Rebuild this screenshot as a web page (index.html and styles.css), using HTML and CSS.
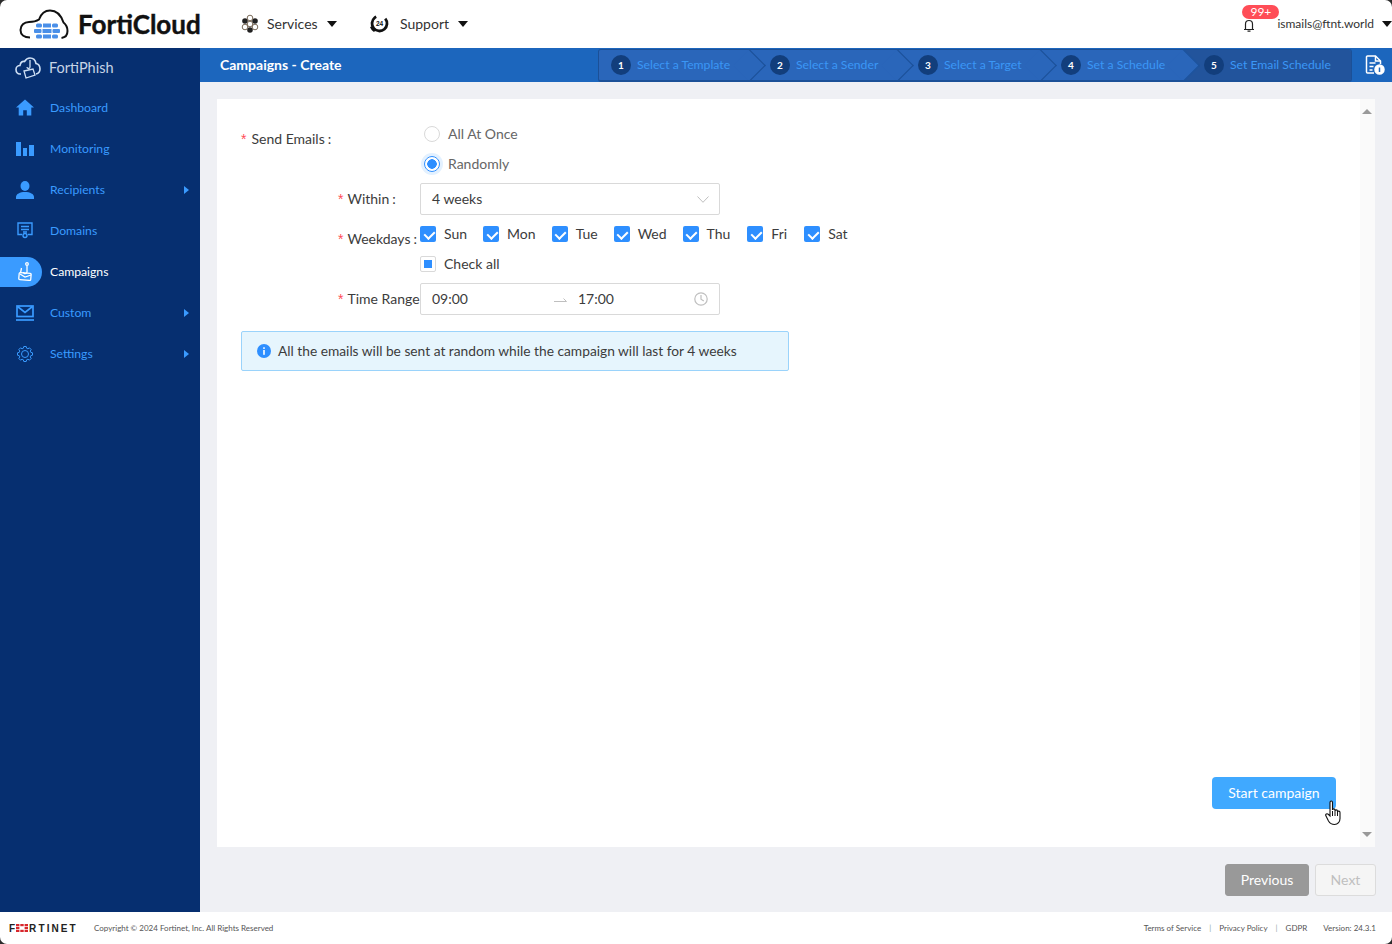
FILE: index.html
```html
<!DOCTYPE html>
<html lang="en">
<head>
    <meta charset="UTF-8">
    <meta name="viewport" content="width=device-width, initial-scale=1.0">
    <title>Campaigns - Create - FortiPhish</title>
    <link rel="stylesheet" href="styles.css">
</head>
<body>

    <!-- Top bar -->
    <div class="topbar">
        <div class="logo">
            <svg class="logo-cloud" width="50" height="30" viewBox="0 0 50 30">
                <path d="M11 28.500C5 28.500 1.500 25.500 1.500 21C1.500 16.500 5 13 10 13C13 13 17 12.500 20 10.500C22 5 26 1.500 31 1.500C37 1.500 42 6 44.500 13.500C47 15.500 48.500 18.500 48.500 22C48.500 26 46 28.500 42.500 29" fill="none" stroke="#111" stroke-width="2"/>
                <g fill="#4a8fe8">
                    <rect x="17" y="14.500" width="6" height="4" rx="1.500"/>
                    <rect x="24" y="14.500" width="8" height="4"/>
                    <rect x="33" y="14.500" width="6" height="4" rx="1.500"/>
                    <rect x="15" y="20" width="7.500" height="4" rx="1"/>
                    <rect x="23.500" y="20" width="9" height="4"/>
                    <rect x="33.500" y="20" width="7.500" height="4" rx="1"/>
                    <rect x="17" y="25.500" width="6" height="4" rx="1.500"/>
                    <rect x="24" y="25.500" width="8" height="4"/>
                    <rect x="33" y="25.500" width="6" height="4" rx="1.500"/>
                </g>
            </svg>
            <span class="logo-text">FortiCloud</span>
        </div>

        <div class="top-menu top-menu-services">
            <svg width="18" height="20" viewBox="0 0 18 20">
                <g fill="#222">
                    <circle cx="4" cy="7" r="2.800"/>
                    <circle cx="14" cy="7" r="2.800"/>
                    <circle cx="9" cy="16" r="2.800"/>
                </g>
                <g fill="none" stroke="#7a6a58" stroke-width="1">
                    <circle cx="9" cy="4" r="2.800"/>
                    <circle cx="9" cy="10" r="2.800"/>
                    <circle cx="4" cy="13" r="2.800"/>
                    <circle cx="14" cy="13" r="2.800"/>
                </g>
            </svg>
            <span>Services</span>
            <i class="top-caret"></i>
        </div>

        <div class="top-menu top-menu-support">
            <svg width="20" height="20" viewBox="0 0 20 20">
                <circle cx="10.500" cy="9.500" r="7.500" fill="none" stroke="#111" stroke-width="2.800" stroke-dasharray="37 10" transform="rotate(-40 10.500 9.500)"/>
                <path d="M1 13l3-1 3 4-2 2c-2-1-3-3-4-5z" fill="#111"/>
                <text x="10.500" y="12" text-anchor="middle" class="support-num">24</text>
            </svg>
            <span>Support</span>
            <i class="top-caret"></i>
        </div>

        <div class="top-right">
            <div class="bell">
                <svg width="12" height="13" viewBox="0 0 12 13">
                    <path d="M2.500 10V5a3.500 3.500 0 0 1 7 0v5M1 10.500h10M4.500 12.200h3" fill="none" stroke="#222" stroke-width="1.200"/>
                </svg>
                <span class="bell-badge">99+</span>
            </div>
            <span class="user-mail">ismails@ftnt.world</span>
            <i class="top-caret"></i>
        </div>
    </div>

    <div class="middle">
        <!-- Sidebar -->
        <div class="sidebar">
            <div class="brand">
                <svg width="26" height="22" viewBox="0 0 26 22">
                    <path d="M6 17H5C2.500 17 1 15 1 12.500C1 10 3 8.500 5 8.500C5.500 5 7.500 4 9.500 4.500C11 2 13 1 15 1C18.500 1 20.500 3.500 21 6.500C23.500 7 25 9.500 25 12C25 14.500 23.500 16.500 21 17" fill="none" stroke="#cfe0f5" stroke-width="1.600"/>
                    <path d="M9 14l9-2 2 6-9 3zM15 3v7c0 2-3 2-3 0" fill="none" stroke="#cfe0f5" stroke-width="1.300"/>
                </svg>
                <span>FortiPhish</span>
            </div>

            <a class="nav-item">
                <span class="nav-icon">
                    <svg width="18" height="17" viewBox="0 0 20 18"><path d="M10 0L0 9h3v9h5v-6h4v6h5V9h3z" fill="#3a9bff"/></svg>
                </span>
                Dashboard
            </a>
            <a class="nav-item">
                <span class="nav-icon">
                    <svg width="18" height="14" viewBox="0 0 18 14" fill="#3a9bff"><rect width="5" height="14"/><rect x="7" y="6" width="4" height="8"/><rect x="13" y="3" width="5" height="11"/></svg>
                </span>
                Monitoring
            </a>
            <a class="nav-item">
                <span class="nav-icon">
                    <svg width="18" height="18" viewBox="0 0 18 18" fill="#3a9bff"><ellipse cx="9" cy="5" rx="4.500" ry="5"/><path d="M0 18v-2c0-3 4-5 9-5s9 2 9 5v2z"/></svg>
                </span>
                Recipients
                <i class="nav-caret"></i>
            </a>
            <a class="nav-item">
                <span class="nav-icon">
                    <svg width="16" height="17" viewBox="0 0 16 17" fill="none" stroke="#3a9bff" stroke-width="1.400"><path d="M5 12.500H1V1h14v11.500h-4"/><path d="M4 4.500h8M4 7.500h8M6 10h4"/><circle cx="8" cy="13.500" r="2"/></svg>
                </span>
                Domains
            </a>
            <a class="nav-item active">
                <span class="nav-icon">
                    <svg width="14" height="19" viewBox="0 0 14 19" fill="none" stroke="#fff" stroke-width="1.300"><rect x="1" y="11" width="12" height="7" rx="1" transform="rotate(5 7 14)"/><path d="M2 12l5 3 6-2"/><circle cx="9" cy="2" r="1.300"/><path d="M9 3.500V10c0 2-3.500 2-3.500 0M3.500 6l-1 5"/></svg>
                </span>
                Campaigns
            </a>
            <a class="nav-item">
                <span class="nav-icon">
                    <svg width="18" height="16" viewBox="0 0 18 16" fill="none" stroke="#3a9bff" stroke-width="1.700"><rect x="1" y="1" width="16" height="10.500"/><path d="M1.500 1.500L9 7.500l7.500-6"/><path d="M0 15h18"/></svg>
                </span>
                Custom
                <i class="nav-caret"></i>
            </a>
            <a class="nav-item">
                <span class="nav-icon">
                    <svg width="16" height="16" viewBox="0 0 16 16" fill="none" stroke="#3a9bff" stroke-width="1"><polygon points="6.340,2.230 6.810,.49 9.190,.49 9.660,2.230 10.910,2.750 12.470,1.850 14.150,3.530 13.250,5.090 13.770,6.340 15.510,6.810 15.510,9.190 13.770,9.660 13.250,10.910 14.150,12.470 12.470,14.150 10.910,13.250 9.660,13.770 9.190,15.510 6.810,15.510 6.340,13.770 5.090,13.250 3.530,14.150 1.850,12.470 2.750,10.910 2.230,9.660 .49,9.190 .49,6.810 2.230,6.340 2.750,5.090 1.850,3.530 3.530,1.850 5.090,2.750"/><circle cx="8" cy="8" r="3.500"/></svg>
                </span>
                Settings
                <i class="nav-caret"></i>
            </a>
        </div>

        <div class="content">
            <!-- Title and wizard steps -->
            <div class="titlebar">
                <h1>Campaigns - Create</h1>
                <div class="steps">
                    <div class="step step-1"><b>1</b>Select a Template</div>
                    <div class="step step-2"><b>2</b>Select a Sender</div>
                    <div class="step step-3"><b>3</b>Select a Target</div>
                    <div class="step step-4"><b>4</b>Set a Schedule</div>
                    <div class="step step-5"><b>5</b>Set Email Schedule</div>
                </div>
                <div class="doc-icon">
                    <svg width="20" height="20" viewBox="0 0 20 20" fill="none" stroke="#fff" stroke-width="1.500">
                        <path d="M9 18H2.500a1 1 0 0 1-1-1V2a1 1 0 0 1 1-1h8l5 5v3"/>
                        <path d="M10.500 1v5h5M4.500 8h6M4.500 11.500h4M4.500 15h3"/>
                        <circle cx="14.500" cy="14.500" r="4.500" fill="#fff"/>
                        <path d="M14.500 12.500v4.500" stroke="#1c66bd"/>
                    </svg>
                </div>
            </div>

            <div class="main">
                <div class="panel">
                    <div class="form">
                        <div class="form-row row-send">
                            <label class="form-label label-send"><em>*</em>Send Emails<u>:</u></label>
                            <div class="radio-group">
                                <div class="radio-line">
                                    <span class="radio"></span>All At Once
                                </div>
                                <div class="radio-line">
                                    <span class="radio checked"></span>Randomly
                                </div>
                            </div>
                        </div>

                        <div class="form-row row-within">
                            <label class="form-label"><em>*</em>Within<u>:</u></label>
                            <div class="field">
                                <span>4 weeks</span>
                                <svg class="select-arrow" width="12" height="7" viewBox="0 0 12 7"><path d="M.5.500L6 6.300 11.500.500" fill="none" stroke="#bfbfbf"/></svg>
                            </div>
                        </div>

                        <div class="form-row row-weekdays">
                            <label class="form-label"><em>*</em>Weekdays<u>:</u></label>
                            <div class="check-group">
                                <div class="check-line">
                                    <span class="check-item"><i class="box on"></i>Sun</span>
                                    <span class="check-item"><i class="box on"></i>Mon</span>
                                    <span class="check-item"><i class="box on"></i>Tue</span>
                                    <span class="check-item"><i class="box on"></i>Wed</span>
                                    <span class="check-item"><i class="box on"></i>Thu</span>
                                    <span class="check-item"><i class="box on"></i>Fri</span>
                                    <span class="check-item"><i class="box on"></i>Sat</span>
                                </div>
                                <div class="check-line">
                                    <span class="check-item"><i class="box partial"></i>Check all</span>
                                </div>
                            </div>
                        </div>

                        <div class="form-row row-time">
                            <label class="form-label"><em>*</em>Time Range</label>
                            <div class="field">
                                <span class="time-from">09:00</span>
                                <svg class="time-arrow" width="13" height="6" viewBox="0 0 13 6"><path d="M0 5.500h12.500L9.500 2.500" fill="none" stroke="#bfbfbf"/></svg>
                                <span class="time-to">17:00</span>
                                <svg width="14" height="14" viewBox="0 0 14 14" fill="none" stroke="#bfbfbf" stroke-width="1.200"><circle cx="7" cy="7" r="6.200"/><path d="M7 3v4.200l2.800 1.800"/></svg>
                            </div>
                        </div>

                        <div class="alert">
                            <svg width="14" height="14" viewBox="0 0 14 14"><circle cx="7" cy="7" r="7" fill="#2e8fff"/><rect x="6.200" y="6" width="1.600" height="4.800" fill="#fff"/><rect x="6.200" y="3.300" width="1.600" height="1.600" fill="#fff"/></svg>
                            All the emails will be sent at random while the campaign will last for 4 weeks
                        </div>
                    </div>

                    <div class="panel-actions">
                        <button class="btn-start">Start campaign</button>
                    </div>

                    <i class="scroll-up"></i>
                    <i class="scroll-down"></i>
                    <svg class="hand" width="18" height="26" viewBox="0 0 18 26">
                        <path d="M5 2.500c0-2 2.500-2 2.500 0V10c0-1.500 2.500-1.500 2.500 0v1c0-1.500 2.500-1.500 2.500 0v1c0-1.300 2.500-1.300 2.500.5v6c0 3-2 6-5.500 6-3 0-4.500-1-6-3.500L1 16c-1-2 1-3 2.500-1.500L5 16z" fill="#fff" stroke="#111" stroke-width="1.100"/>
                        <path d="M7.500 11v5M10 11v5M12.500 12v4" stroke="#111" fill="none"/>
                    </svg>
                </div>

                <div class="wizard-buttons">
                    <button class="btn-prev">Previous</button>
                    <button class="btn-next">Next</button>
                </div>
            </div>
        </div>
    </div>

    <!-- Footer -->
    <div class="footer">
        <span class="ftnt-logo">F<svg width="12" height="8" viewBox="0 0 12 8" fill="#d8262c"><rect width="3.400" height="2.200"/><rect x="4.300" width="3.400" height="2.200"/><rect x="8.600" width="3.400" height="2.200"/><rect y="2.900" width="3.400" height="2.200"/><rect x="8.600" y="2.900" width="3.400" height="2.200"/><rect y="5.800" width="3.400" height="2.200"/><rect x="4.300" y="5.800" width="3.400" height="2.200"/><rect x="8.600" y="5.800" width="3.400" height="2.200"/></svg><span class="ftnt-rest">RTINET</span></span>
        <span class="copyright">Copyright © 2024 Fortinet, Inc. All Rights Reserved</span>
        <div class="footer-links">
            <span>Terms of Service</span>
            <i>|</i>
            <span>Privacy Policy</span>
            <i>|</i>
            <span>GDPR</span>
            <span class="version">Version: 24.3.1</span>
        </div>
    </div>

</body>
</html>
```

FILE: styles.css
```css
* {
    box-sizing: border-box;
}

body {
    font-family: Lato, "Open Sans", sans-serif;
    font-size: 14px;
    color: #3c3c3c;
    background-color: #eff0f4;
    margin: 0;
    width: 1392px;
    height: 944px;
    display: flex;
    flex-direction: column;
    overflow: hidden;
}

/* the window's rounded corners */
body::after {
    content: "";
    position: fixed;
    top: 0;
    left: 0;
    width: 1392px;
    height: 944px;
    border-radius: 7px;
    box-shadow: 0 0 0 10px #2b2b2b;
    pointer-events: none;
}

/* Top bar */
.topbar {
    height: 48px;
    flex: none;
    background: white;
    display: flex;
    align-items: center;
    padding-left: 19px;
    color: #333;
}

.logo {
    display: flex;
    align-items: center;
    width: 222px;
}

.logo-cloud {
    margin-right: 10px;
}

.logo-text {
    font-size: 26px;
    font-weight: 700;
    color: #111;
    margin-left: -1px;
    -webkit-text-stroke: 0.4px #111;
}

.top-menu {
    display: flex;
    align-items: center;
}

.top-menu span {
    font-size: 14px;
    padding-bottom: 2px;
}

.top-menu-services {
    width: 128px;
}

.top-menu-services svg {
    margin-right: 8px;
}

.top-menu-support svg {
    margin-right: 11px;
}

.top-menu .top-caret {
    margin-left: 9px;
}

.support-num {
    font-family: "Liberation Sans", sans-serif;
    font-size: 6.5px;
    font-weight: 700;
    fill: #111;
}

.top-caret {
    width: 0;
    height: 0;
    border-left: 5px solid transparent;
    border-right: 5px solid transparent;
    border-top: 6px solid #111;
}

.top-right {
    margin-left: auto;
    display: flex;
    align-items: center;
}

.top-right .top-caret {
    margin-left: 8px;
}

.bell {
    position: relative;
    display: flex;
    margin-right: 22px;
    margin-top: 3px;
}

.bell-badge {
    position: absolute;
    top: -14px;
    left: -1px;
    width: 37px;
    height: 14px;
    line-height: 14px;
    background: #ff4d57;
    color: white;
    font-size: 12px;
    text-align: center;
    border-radius: 7px;
}

.user-mail {
    font-size: 12px;
    padding-bottom: 2px;
}

.middle {
    flex: 1;
    display: flex;
    min-height: 0;
}

/* Sidebar */
.sidebar {
    width: 200px;
    flex: none;
    background: #062f70;
}

.brand {
    height: 39px;
    display: flex;
    align-items: center;
    padding: 1px 0 0 15px;
    color: #c6d4e6;
    font-size: 14.5px;
    line-height: 16px;
}

.brand svg {
    margin-right: 8px;
}

.nav-item {
    height: 41px;
    display: flex;
    align-items: center;
    font-size: 12.2px;
    color: #3a9bff;
}

.nav-item.active {
    color: white;
}

.nav-icon {
    width: 42px;
    height: 30px;
    margin-right: 8px;
    padding-left: 8px;
    display: flex;
    align-items: center;
    justify-content: center;
    border-radius: 0 15px 15px 0;
}

.active .nav-icon {
    background: #3a9bff;
}

.nav-caret {
    margin-left: auto;
    margin-right: 11px;
    width: 0;
    height: 0;
    border-top: 4px solid transparent;
    border-bottom: 4px solid transparent;
    border-left: 5px solid #3a9bff;
}

.content {
    flex: 1;
    display: flex;
    flex-direction: column;
    min-width: 0;
}

/* Title and steps */
.titlebar {
    height: 34px;
    flex: none;
    background: #1c66bd;
    display: flex;
    align-items: center;
    padding-left: 20px;
}

.titlebar h1 {
    margin: 0 0 2px;
    width: 378px;
    font-size: 14px;
    font-weight: 700;
    color: white;
}

.steps {
    display: flex;
    height: 33px;
    margin-top: 1px;
    border: 1px solid #1b5097;
    border-width: 1px 1px 2px 1px;
    border-radius: 3px;
    overflow: hidden;
}

.step {
    position: relative;
    display: flex;
    align-items: flex-start;
    height: 100%;
    padding-left: 20px;
    font-size: 12.2px;
    line-height: 30px;
    color: #3b97f6;
    background: #2a66ba;
}

.step::after {
    content: "";
    position: absolute;
    top: 4px;
    right: -11px;
    width: 22px;
    height: 22px;
    background: inherit;
    border-top: 1px solid #1b5097;
    border-right: 1px solid #1b5097;
    transform: rotate(45deg);
    z-index: 1;
}

.step b {
    align-self: center;
    width: 20px;
    height: 20px;
    margin-right: 6px;
    border-radius: 50%;
    background: #123e7c;
    color: white;
    font-size: 10px;
    line-height: 20px;
    text-align: center;
}

.step-1 {
    width: 151px;
    padding-left: 12px;
}

.step-2 {
    width: 148px;
}

.step-3,
.step-4 {
    width: 143px;
}

.step-5 {
    width: 167px;
    background: #22549c;
}

.step-5::after {
    display: none;
}

.doc-icon {
    margin-left: 13px;
    display: flex;
}

/* Main area */
.main {
    flex: 1;
    display: flex;
    flex-direction: column;
    padding: 17px 16px 16px 17px;
    min-height: 0;
}

.panel {
    position: relative;
    height: 748px;
    margin-right: 1px;
    background: linear-gradient(to left, #fafafa 15px, white 15px);
    display: flex;
    flex-direction: column;
    justify-content: space-between;
    padding: 20px 39px 38px 24px;
}

.form-row {
    display: flex;
}

.form-label {
    flex: none;
    font-size: 14px;
    white-space: nowrap;
    color: #3c3c3c;
}

.form-label em {
    font-family: "Liberation Sans", sans-serif;
    color: #ff4d57;
    font-style: normal;
    margin-right: 4px;
}

.form-label u {
    text-decoration: none;
    margin-left: 3px;
}

.label-send {
    width: 183px;
    line-height: 40px;
}

.label-send em {
    margin-right: 5px;
}

.radio-group {
    display: flex;
    flex-direction: column;
}

.radio-line {
    height: 30px;
    display: flex;
    line-height: 30px;
    color: #666;
}

.radio {
    width: 16px;
    height: 16px;
    margin: 7px 8px 0 0;
    border: 1px solid #d9d9d9;
    border-radius: 50%;
    background: white;
}

.radio.checked {
    border-color: #2e8fff;
    box-shadow: 0 0 0 3px #e3f1ff;
    background: radial-gradient(circle, #2e8fff 0 4.5px, white 5px);
}

.row-within {
    margin-top: 4px;
    padding-left: 97px;
}

.row-within .form-label,
.row-weekdays .form-label,
.row-time .form-label {
    width: 82px;
}

.row-within .form-label {
    line-height: 32px;
}

.field {
    width: 300px;
    height: 32px;
    padding: 0 11px;
    border: 1px solid #d9d9d9;
    border-radius: 2px;
    display: flex;
    align-items: flex-start;
    justify-content: space-between;
    line-height: 30px;
    color: #3c3c3c;
}

.field svg {
    align-self: center;
}

.select-arrow {
    margin-right: -1px;
}

.row-weekdays {
    margin-top: 4px;
    padding-left: 97px;
}

.row-weekdays .form-label {
    line-height: 40px;
}

.check-line {
    height: 30px;
    display: flex;
    gap: 16px;
    line-height: 30px;
}

.check-item {
    display: flex;
}

.check-item:nth-child(5),
.check-item:nth-child(6) {
    margin-right: 1px;
}

.box {
    position: relative;
    width: 16px;
    height: 16px;
    margin: 7px 8px 0 0;
    border-radius: 2px;
    background: #2e8fff;
}

.box.on::after {
    content: "";
    position: absolute;
    left: 5.5px;
    top: 2.5px;
    width: 5px;
    height: 8px;
    border: solid white;
    border-width: 0 2px 2px 0;
    transform: rotate(45deg);
}

.box.partial {
    background: white;
    border: 1px solid #d9d9d9;
}

.box.partial::after {
    content: "";
    position: absolute;
    left: 3px;
    top: 3px;
    width: 8px;
    height: 8px;
    background: #2e8fff;
}

.row-time {
    margin-top: 4px;
    padding-left: 97px;
}

.row-time .form-label {
    line-height: 32px;
}

.time-from {
    width: 122px;
}

.time-to {
    flex: 1;
    margin-left: 11px;
}

.alert {
    width: 548px;
    height: 40px;
    margin-top: 16px;
    padding-left: 15px;
    display: flex;
    align-items: flex-start;
    gap: 7px;
    background: #e6f5fd;
    border: 1px solid #9ad3fb;
    border-radius: 2px;
    font-size: 13.75px;
    line-height: 38px;
    color: #3c3c3c;
}

.alert svg {
    align-self: center;
}

.panel-actions {
    display: flex;
    justify-content: flex-end;
}

.btn-start {
    width: 124px;
    height: 32px;
    padding-bottom: 2px;
    border: none;
    border-radius: 4px;
    background: #40a9ff;
    color: white;
    font-family: inherit;
    font-size: 14px;
}

.scroll-up,
.scroll-down {
    position: absolute;
    right: 3px;
    width: 0;
    height: 0;
    border-left: 5px solid transparent;
    border-right: 5px solid transparent;
}

.scroll-up {
    top: 10px;
    border-bottom: 5px solid #999;
}

.scroll-down {
    bottom: 10px;
    border-top: 5px solid #999;
}

.hand {
    position: absolute;
    left: 1108px;
    top: 701px;
}

.wizard-buttons {
    display: flex;
    justify-content: flex-end;
    gap: 6px;
    margin-top: 17px;
}

.wizard-buttons button {
    height: 32px;
    padding-bottom: 2px;
    border-radius: 3px;
    font-family: inherit;
    font-size: 14px;
}

.btn-prev {
    width: 84px;
    background: #999;
    border: 1px solid #999;
    color: white;
}

.btn-next {
    width: 61px;
    background: #f5f5f5;
    border: 1px solid #dcdcdc;
    color: #bfbfbf;
}

/* Footer */
.footer {
    height: 32px;
    flex: none;
    background: white;
    display: flex;
    align-items: center;
    padding: 0 16px 0 9px;
    font-size: 8px;
    color: #555;
}

.ftnt-logo {
    width: 85px;
    display: flex;
    align-items: center;
    font-family: "Liberation Sans", sans-serif;
    font-size: 10px;
    font-weight: 700;
    color: #222;
}

.ftnt-logo svg {
    margin: 0 1px;
}

.ftnt-rest {
    letter-spacing: 2.1px;
}

.footer-links {
    margin-left: auto;
    display: flex;
    gap: 8px;
}

.footer-links i {
    font-style: normal;
    color: #9aa;
}

.version {
    margin-left: 8px;
}
```
